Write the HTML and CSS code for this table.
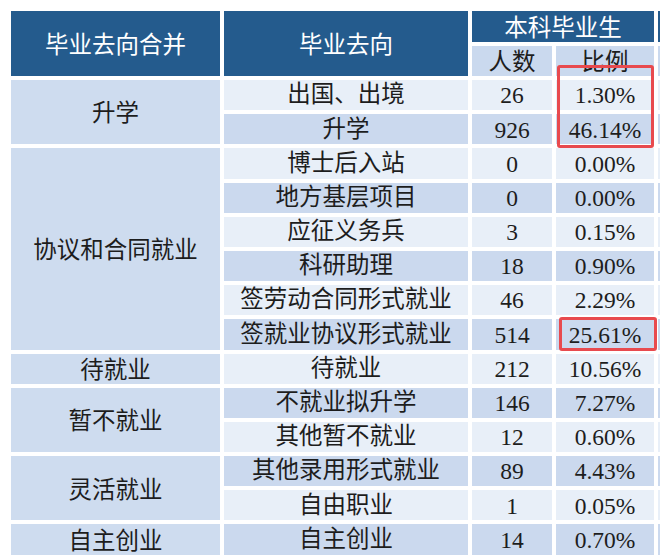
FILE: index.html
```html
<!DOCTYPE html>
<html lang="zh-CN">
<head>
<meta charset="utf-8">
<title>毕业去向</title>
<link rel="stylesheet" href="styles.css">
</head>
<body>
<div class="title"><span class="t-dark">表</span><span class="t-blue">本科毕业生去向分布</span></div>
<div class="wrap">
  <div class="grid">
    <div class="c h1 rs2 sans">毕业去向合并</div>
    <div class="c h1 rs2 sans">毕业去向</div>
    <div class="c h1 cs2 sans">本科毕业生</div>
    <div class="c h1"></div>
    <div class="c h2 sans">人数</div>
    <div class="c h2 sans">比例</div>
    <div class="c h2"></div>

    <div class="c grp rs2 sans">升学</div>
    <div class="c lt txt">出国、出境</div><div class="c lt num">26</div><div class="c lt num">1.30%</div><div class="c lt"></div>
    <div class="c dk txt">升学</div><div class="c dk num">926</div><div class="c dk num">46.14%</div><div class="c dk"></div>

    <div class="c grp rs6 sans">协议和合同就业</div>
    <div class="c lt txt">博士后入站</div><div class="c lt num">0</div><div class="c lt num">0.00%</div><div class="c lt"></div>
    <div class="c dk txt">地方基层项目</div><div class="c dk num">0</div><div class="c dk num">0.00%</div><div class="c dk"></div>
    <div class="c lt txt">应征义务兵</div><div class="c lt num">3</div><div class="c lt num">0.15%</div><div class="c lt"></div>
    <div class="c dk txt">科研助理</div><div class="c dk num">18</div><div class="c dk num">0.90%</div><div class="c dk"></div>
    <div class="c lt txt">签劳动合同形式就业</div><div class="c lt num">46</div><div class="c lt num">2.29%</div><div class="c lt"></div>
    <div class="c dk txt">签就业协议形式就业</div><div class="c dk num">514</div><div class="c dk num">25.61%</div><div class="c dk"></div>

    <div class="c grp sans">待就业</div>
    <div class="c lt txt">待就业</div><div class="c lt num">212</div><div class="c lt num">10.56%</div><div class="c lt"></div>

    <div class="c grp rs2 sans">暂不就业</div>
    <div class="c dk txt">不就业拟升学</div><div class="c dk num">146</div><div class="c dk num">7.27%</div><div class="c dk"></div>
    <div class="c lt txt">其他暂不就业</div><div class="c lt num">12</div><div class="c lt num">0.60%</div><div class="c lt"></div>

    <div class="c grp rs2 sans">灵活就业</div>
    <div class="c dk txt">其他录用形式就业</div><div class="c dk num">89</div><div class="c dk num">4.43%</div><div class="c dk"></div>
    <div class="c lt txt">自由职业</div><div class="c lt num">1</div><div class="c lt num">0.05%</div><div class="c lt"></div>

    <div class="c grp sans">自主创业</div>
    <div class="c dk txt">自主创业</div><div class="c dk num">14</div><div class="c dk num">0.70%</div><div class="c dk"></div>
  </div>
  <div class="mark mark-a"></div>
  <div class="mark mark-b"></div>
</div>
</body>
</html>
```

FILE: styles.css
```css
html, body {
  margin: 0;
  padding: 0;
  background: #ffffff;
  overflow: hidden;
}
body {
  width: 660px;
  height: 560px;
  font-family: "Noto Sans CJK SC", sans-serif;
}
.title {
  height: 11px;
  overflow: hidden;
  display: flex;
  align-items: flex-start;
  font-size: 21px;
  line-height: 24px;
  white-space: nowrap;
}
.title span {
  display: block;
  flex-shrink: 0;
  margin-top: -26px;
}
.t-dark {
  color: #555555;
  margin-left: 340px;
}
.t-blue {
  color: #2d5f92;
  margin-left: 104px;
}
.wrap {
  position: relative;
  margin-left: 11px;
  width: 760px;
}
.grid {
  display: grid;
  grid-template-columns: 209px 244px 80px 98px 100px;
  grid-template-rows: 30.5px 30.5px repeat(14, 30.2px);
  gap: 4px;
}
.c {
  display: flex;
  align-items: center;
  justify-content: center;
  font-size: 23.5px;
  line-height: 1;
  color: #1d1d1d;
  white-space: nowrap;
}
.rs2 { grid-row: span 2; }
.rs6 { grid-row: span 6; }
.cs2 { grid-column: span 2; }
.sans { font-family: "Noto Sans CJK SC", sans-serif; }
.txt { font-family: "Liberation Serif", "Noto Sans CJK SC", serif; }
.num {
  font-family: "Liberation Serif", serif;
  padding-top: 2px;
}
.h1 {
  background: #245b8d;
  color: #ffffff;
}
.h2 {
  background: #cad9ee;
  color: #1d1d1d;
}
.grp { background: #cedcef; }
.lt { background: #e8eff8; }
.dk { background: #cbd9ee; }
.mark {
  position: absolute;
  border: 3px solid #e84a4e;
  border-radius: 3px;
  box-sizing: border-box;
}
.mark-a {
  left: 546px;
  top: 54px;
  width: 97px;
  height: 83px;
}
.mark-b {
  left: 548px;
  top: 306px;
  width: 98px;
  height: 34px;
}
```
